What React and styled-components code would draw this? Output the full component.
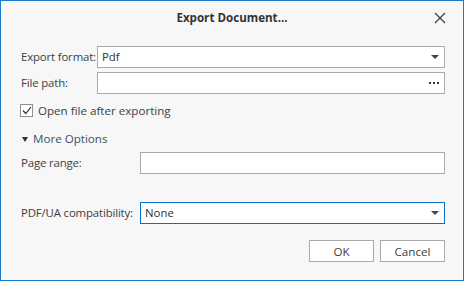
import React from 'react'
import styled, { createGlobalStyle } from 'styled-components'

const Global = createGlobalStyle`
  html, body { margin: 0; padding: 0; background: #f7f7f7; }
  * { box-sizing: border-box; }
`

const Window = styled.div`
  width: 464px;
  height: 281px;
  border: 1px solid #1a7acb;
  background: #f7f7f7;
  font-family: "Open Sans", "Noto Sans", sans-serif;
  font-size: 11.4px;
  line-height: 16px;
  color: #404040;
  display: flex;
  flex-direction: column;
`

const TitleBar = styled.div`
  height: 33px;
  display: flex;
  align-items: center;
  justify-content: center;
  position: relative;
  h1 {
    margin: 0;
    font-size: 11.6px;
    font-weight: 700;
    color: #333;
  }
`

const CloseButton = styled.button`
  position: absolute;
  right: 16px;
  top: 10px;
  width: 14px;
  height: 14px;
  padding: 0;
  border: none;
  background: none;
  display: flex;
  align-items: center;
  justify-content: center;
`

const Body = styled.div`
  padding: 12px 18px 0 19px;
  display: flex;
  flex-direction: column;
`

const Row = styled.div`
  display: grid;
  grid-template-columns: ${p => p.$label}px 1fr;
  align-items: center;
  margin-top: ${p => p.$top || 0}px;
`

const Label = styled.label`
  padding-left: 1px;
  white-space: nowrap;
  letter-spacing: -0.15px;
`

const Field = styled.div`
  height: 22px;
  background: #fff;
  border: 1px solid ${p => (p.$focused ? '#0a6fc8' : '#ababab')};
  display: flex;
  align-items: center;
  padding: 0 5px 0 4px;
  color: #333;
  span { flex: 1; }
`

const Arrow = styled.i`
  width: 0;
  height: 0;
  border-left: 4px solid transparent;
  border-right: 4px solid transparent;
  border-top: 4px solid #444;
`

const Dots = styled.i`
  display: flex;
  gap: 2px;
  b { width: 2px; height: 2px; background: #333; }
`

const CheckRow = styled.label`
  display: flex;
  align-items: center;
  gap: 5px;
  height: 13px;
  margin-top: 10px;
  font-size: 11.6px;
`

const Box = styled.span`
  width: 13px;
  height: 13px;
  border: 1px solid #8e8e8e;
  background: #fff;
  display: flex;
  align-items: center;
  justify-content: center;
`

const Expander = styled.div`
  display: flex;
  align-items: center;
  gap: 5px;
  height: 16px;
  margin-top: 14px;
  padding-left: 2px;
  color: #3d4f63;
  font-size: 11.6px;
  &::before {
    content: "";
    border-left: 3px solid transparent;
    border-right: 3px solid transparent;
    border-top: 5px solid #333;
  }
`

const Footer = styled.div`
  display: flex;
  justify-content: flex-end;
  gap: 6px;
  margin-top: 16px;
`

const Button = styled.button`
  width: 65px;
  height: 22px;
  background: #fff;
  border: 1px solid #ababab;
  font-family: inherit;
  font-size: 11.6px;
  color: #404040;
  padding: 0;
`

export default function App() {
  return (
    <>
      <Global />
      <Window>
        <TitleBar>
          <h1>Export Document...</h1>
          <CloseButton aria-label="Close">
            <svg width="12" height="12" viewBox="0 0 12 12">
              <path d="M1 1L11 11M11 1L1 11" stroke="#444" strokeWidth="1.3" />
            </svg>
          </CloseButton>
        </TitleBar>
        <Body>
          <Row $label={77}>
            <Label>Export format:</Label>
            <Field><span>Pdf</span><Arrow /></Field>
          </Row>
          <Row $label={77} $top={4}>
            <Label>File path:</Label>
            <Field><span /><Dots><b /><b /><b /></Dots></Field>
          </Row>
          <CheckRow>
            <Box>
              <svg width="10" height="9" viewBox="0 0 10 9">
                <path d="M1 4.5L3.8 7.5L9 1" fill="none" stroke="#333" strokeWidth="1.2" />
              </svg>
            </Box>
            Open file after exporting
          </CheckRow>
          <Expander>More Options</Expander>
          <Row $label={120} $top={5}>
            <Label>Page range:</Label>
            <Field />
          </Row>
          <Row $label={120} $top={28}>
            <Label>PDF/UA compatibility:</Label>
            <Field $focused><span>None</span><Arrow /></Field>
          </Row>
          <Footer>
            <Button>OK</Button>
            <Button>Cancel</Button>
          </Footer>
        </Body>
      </Window>
    </>
  )
}
